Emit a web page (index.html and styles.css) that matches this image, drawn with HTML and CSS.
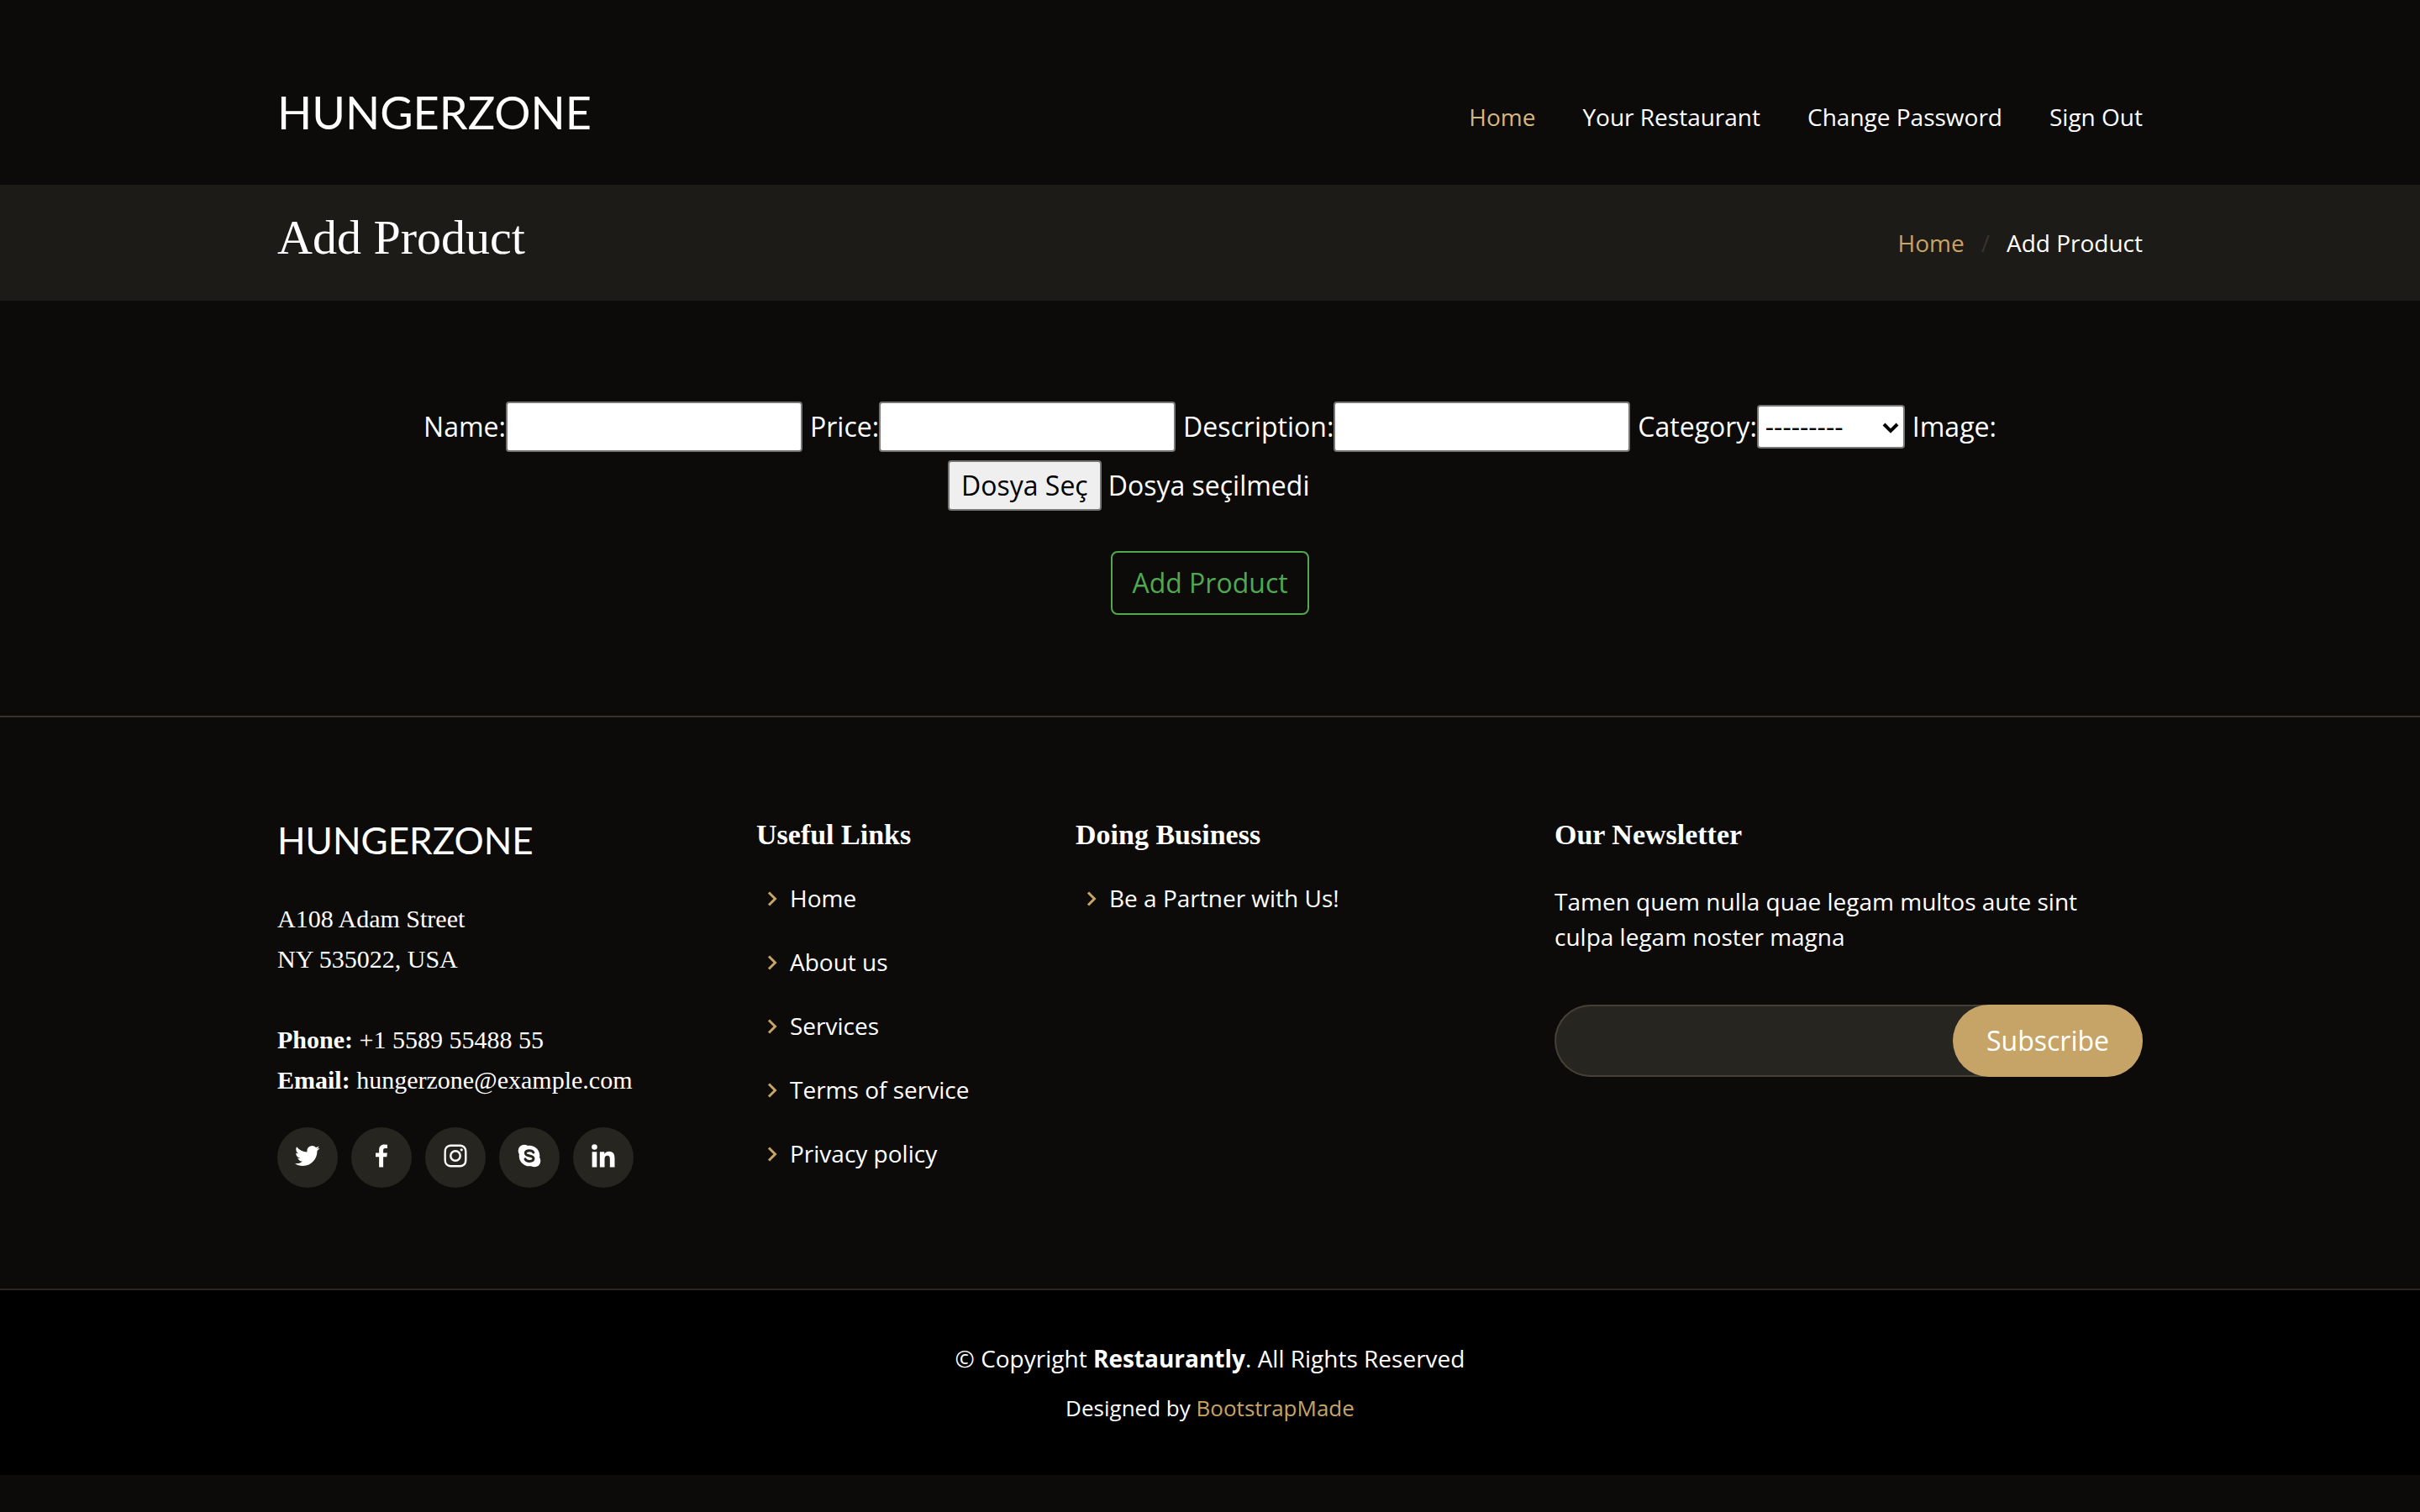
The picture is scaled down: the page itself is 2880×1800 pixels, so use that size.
FILE: index.html
```html
<!DOCTYPE html>
<html lang="tr">
<head>
  <meta charset="utf-8">
  <meta name="viewport" content="width=device-width, initial-scale=1">
  <title>Add Product - Hungerzone</title>
  <link rel="stylesheet" href="styles.css">
</head>
<body>
  <header class="header">
    <div class="container header-row">
      <h1 class="logo"><a href="#">HUNGERZONE</a></h1>
      <nav class="nav">
        <a class="active" href="#">Home</a>
        <a href="#">Your Restaurant</a>
        <a href="#">Change Password</a>
        <a href="#">Sign Out</a>
      </nav>
    </div>
  </header>

  <main>
    <section class="breadcrumbs">
      <div class="container breadcrumbs-row">
        <h2 class="page-title">Add Product</h2>
        <ol class="trail">
          <li><a href="#">Home</a></li>
          <li>Add Product</li>
        </ol>
      </div>
    </section>

    <section class="product">
      <form class="container product-form">
        <div class="fields">
          <div class="field"><label for="name">Name:</label><input class="text-input" id="name" type="text"></div>
          <div class="field"><label for="price">Price:</label><input class="text-input" id="price" type="text"></div>
          <div class="field"><label for="description">Description:</label><input class="text-input" id="description" type="text"></div>
          <div class="field">
            <label for="category">Category:</label>
            <div class="select-wrap">
              <select class="select" id="category"><option>---------</option></select>
              <svg class="select-arrow" viewBox="0 0 20 14" aria-hidden="true"><path d="M2 3l8 8 8-8" fill="none" stroke="#000" stroke-width="4"/></svg>
            </div>
          </div>
          <label for="image">Image:</label>
          <div class="file">
            <input class="file-input" id="image" type="file">
            <span class="file-button">Dosya Seç</span>
            <span>Dosya seçilmedi</span>
          </div>
        </div>
        <button class="submit" type="submit">Add Product</button>
      </form>
    </section>
  </main>

  <footer class="footer">
    <div class="footer-top">
      <div class="container footer-grid">
        <div>
          <h3 class="footer-logo">HUNGERZONE</h3>
          <p class="address">
            A108 Adam Street<br>
            NY 535022, USA<br><br>
            <strong>Phone:</strong> +1 5589 55488 55<br>
            <strong>Email:</strong> hungerzone@example.com
          </p>
          <div class="social">
            <a href="#" aria-label="Twitter"><svg viewBox="0 0 24 24"><path d="M19.633 7.997c.013.175.013.349.013.523 0 5.325-4.053 11.461-11.46 11.461-2.282 0-4.402-.661-6.186-1.809.324.037.636.05.973.05a8.07 8.07 0 0 0 5.001-1.721 4.036 4.036 0 0 1-3.767-2.793c.249.037.499.062.761.062.361 0 .724-.05 1.061-.137a4.027 4.027 0 0 1-3.23-3.953v-.05c.537.299 1.16.486 1.82.511a4.022 4.022 0 0 1-1.796-3.354c0-.748.199-1.434.548-2.032a11.457 11.457 0 0 0 8.306 4.215c-.062-.3-.1-.611-.1-.923a4.026 4.026 0 0 1 4.028-4.028c1.16 0 2.207.486 2.943 1.272a7.957 7.957 0 0 0 2.556-.973 4.02 4.02 0 0 1-1.771 2.22 8.073 8.073 0 0 0 2.319-.624 8.645 8.645 0 0 1-2.019 2.083z"/></svg></a>
            <a href="#" aria-label="Facebook"><svg viewBox="0 0 24 24"><path d="M13.397 20.997v-8.196h2.765l.411-3.209h-3.176V7.548c0-.926.258-1.56 1.587-1.56h1.684V3.127A22.336 22.336 0 0 0 14.201 3c-2.444 0-4.122 1.492-4.122 4.231v2.355H7.332v3.209h2.753v8.202h3.312z"/></svg></a>
            <a href="#" aria-label="Instagram"><svg viewBox="0 0 24 24"><path d="M11.999 7.377a4.623 4.623 0 1 0 0 9.248 4.623 4.623 0 0 0 0-9.248zm0 7.627a3.004 3.004 0 1 1 0-6.008 3.004 3.004 0 0 1 0 6.008z"/><circle cx="16.806" cy="7.207" r="1.078"/><path d="M20.533 6.111A4.605 4.605 0 0 0 17.9 3.479a6.606 6.606 0 0 0-2.186-.42c-.963-.042-1.268-.054-3.71-.054s-2.755 0-3.71.054a6.554 6.554 0 0 0-2.184.42 4.6 4.6 0 0 0-2.633 2.632 6.585 6.585 0 0 0-.419 2.186c-.043.962-.056 1.267-.056 3.71 0 2.442 0 2.753.056 3.71.015.748.156 1.486.419 2.187a4.61 4.61 0 0 0 2.634 2.632 6.584 6.584 0 0 0 2.185.45c.963.042 1.268.055 3.71.055s2.755 0 3.71-.055a6.615 6.615 0 0 0 2.186-.419 4.613 4.613 0 0 0 2.633-2.633c.263-.7.404-1.438.419-2.186.043-.962.056-1.267.056-3.71s0-2.753-.056-3.71a6.581 6.581 0 0 0-.421-2.217zm-1.218 9.532a5.043 5.043 0 0 1-.311 1.688 2.987 2.987 0 0 1-1.712 1.711 4.985 4.985 0 0 1-1.67.311c-.95.044-1.218.055-3.654.055-2.438 0-2.687 0-3.655-.055a4.96 4.96 0 0 1-1.669-.311 2.985 2.985 0 0 1-1.719-1.711 5.08 5.08 0 0 1-.311-1.669c-.043-.95-.053-1.218-.053-3.654 0-2.437 0-2.686.053-3.655a5.038 5.038 0 0 1 .311-1.687c.305-.789.93-1.41 1.719-1.712a5.01 5.01 0 0 1 1.669-.311c.951-.043 1.218-.055 3.655-.055s2.687 0 3.654.055a4.96 4.96 0 0 1 1.67.311 2.991 2.991 0 0 1 1.712 1.712 5.08 5.08 0 0 1 .311 1.669c.043.951.055 1.218.055 3.655 0 2.436 0 2.698-.043 3.654h-.011z"/></svg></a>
            <a href="#" aria-label="Skype"><svg viewBox="0 0 24 24"><circle cx="12" cy="12" r="8.2"/><circle cx="8" cy="8" r="4.9"/><circle cx="16" cy="16" r="4.9"/><path class="skype-s" d="M15.2 9.3c-.5-1-1.700-1.500-3.200-1.500-1.900 0-3.100.8-3.100 2.100 0 3 6.400 1.300 6.400 4.300 0 1.300-1.300 2.100-3.200 2.100-1.700 0-2.900-.6-3.400-1.700"/></svg></a>
            <a href="#" aria-label="LinkedIn"><svg viewBox="0 0 24 24"><circle cx="4.983" cy="5.009" r="2.188"/><path d="M9.237 8.855v12.139h3.769v-6.003c0-1.584.298-3.118 2.262-3.118 1.937 0 1.961 1.811 1.961 3.218v5.904H21v-6.657c0-3.270-.704-5.783-4.526-5.783-1.835 0-3.065 1.007-3.568 1.960h-.051v-1.660H9.237zm-6.142 0H6.870v12.139H3.095z"/></svg></a>
          </div>
        </div>

        <div>
          <h4 class="footer-heading">Useful Links</h4>
          <ul class="links">
            <li><svg viewBox="0 0 24 24" aria-hidden="true"><path d="M10.707 17.707 16.414 12l-5.707-5.707-1.414 1.414L13.586 12l-4.293 4.293z"/></svg><a href="#">Home</a></li>
            <li><svg viewBox="0 0 24 24" aria-hidden="true"><path d="M10.707 17.707 16.414 12l-5.707-5.707-1.414 1.414L13.586 12l-4.293 4.293z"/></svg><a href="#">About us</a></li>
            <li><svg viewBox="0 0 24 24" aria-hidden="true"><path d="M10.707 17.707 16.414 12l-5.707-5.707-1.414 1.414L13.586 12l-4.293 4.293z"/></svg><a href="#">Services</a></li>
            <li><svg viewBox="0 0 24 24" aria-hidden="true"><path d="M10.707 17.707 16.414 12l-5.707-5.707-1.414 1.414L13.586 12l-4.293 4.293z"/></svg><a href="#">Terms of service</a></li>
            <li><svg viewBox="0 0 24 24" aria-hidden="true"><path d="M10.707 17.707 16.414 12l-5.707-5.707-1.414 1.414L13.586 12l-4.293 4.293z"/></svg><a href="#">Privacy policy</a></li>
          </ul>
        </div>

        <div>
          <h4 class="footer-heading">Doing Business</h4>
          <ul class="links">
            <li><svg viewBox="0 0 24 24" aria-hidden="true"><path d="M10.707 17.707 16.414 12l-5.707-5.707-1.414 1.414L13.586 12l-4.293 4.293z"/></svg><a href="#">Be a Partner with Us!</a></li>
          </ul>
        </div>

        <div>
          <h4 class="footer-heading">Our Newsletter</h4>
          <p class="newsletter-text">Tamen quem nulla quae legam multos aute sint culpa legam noster magna</p>
          <form class="newsletter">
            <input class="newsletter-input" type="email" aria-label="Email address">
            <button class="newsletter-button" type="submit">Subscribe</button>
          </form>
        </div>
      </div>
    </div>

    <div class="footer-bottom">
      <p class="copyright">© Copyright <strong>Restaurantly</strong>. All Rights Reserved</p>
      <p class="credits">Designed by <a href="#">BootstrapMade</a></p>
    </div>
  </footer>
</body>
</html>
```

FILE: styles.css
```css
:root {
  --gold: #c6a468;
  --page: #0c0b09;
  --panel: #272520;
  --serif: "Liberation Serif", serif;
  --sans: "Open Sans", sans-serif;
  --display: Lato, sans-serif;
}

*,
*::before,
*::after {
  box-sizing: border-box;
}

body {
  margin: 0;
  background: var(--page);
  color: #fff;
  font-family: var(--sans);
  font-size: 32px;
  line-height: 1.5;
}

h1,
h2,
h3,
h4,
p,
ul,
ol {
  margin: 0;
  padding: 0;
}

ul,
ol {
  list-style: none;
}

a {
  color: inherit;
  text-decoration: none;
}

input,
select,
button {
  font: inherit;
}

.container {
  width: 100%;
  max-width: 2280px;
  margin: 0 auto;
  padding: 0 30px;
}

/* Header */
.header {
  padding: 100px 0 42px;
}

.header-row {
  display: flex;
  justify-content: space-between;
  align-items: center;
}

.logo {
  padding-bottom: 10px;
  font-family: var(--display);
  font-size: 54px;
  font-weight: 400;
  line-height: 68px;
}

.nav {
  display: flex;
  gap: 56px;
  font-size: 28px;
}

.nav .active {
  color: #d5b67f;
}

/* Breadcrumbs */
.breadcrumbs {
  padding: 29px 0;
  background: #1d1b17;
}

.breadcrumbs-row {
  display: flex;
  justify-content: space-between;
  align-items: center;
}

.page-title {
  padding-bottom: 12px;
  font-family: var(--serif);
  font-size: 58px;
  font-weight: 400;
  line-height: 68px;
}

.trail {
  display: flex;
  font-size: 28px;
}

.trail a {
  color: var(--gold);
}

.trail li + li::before {
  content: "/";
  padding: 0 20px;
  color: #37332a;
}

/* Product form */
.product {
  padding: 120px 0;
}

.product-form {
  display: flex;
  flex-direction: column;
  align-items: center;
  gap: 48px;
}

.fields {
  display: flex;
  flex-wrap: wrap;
  justify-content: center;
  align-items: center;
  gap: 10px 9px;
}

.field {
  display: flex;
  align-items: center;
}

.text-input {
  width: 353px;
  height: 60px;
  padding: 2px 4px;
  border: 2px solid #767676;
  border-radius: 4px;
  background: #fff;
}

.select-wrap {
  position: relative;
  display: flex;
}

.select {
  appearance: none;
  width: 176px;
  height: 52px;
  padding: 0 8px;
  border: 2px solid #767676;
  border-radius: 4px;
  background: #fff;
  color: #000;
  line-height: 48px;
}

.select-arrow {
  position: absolute;
  top: 20px;
  right: 7px;
  width: 20px;
  height: 14px;
  pointer-events: none;
}

.file {
  position: relative;
  display: flex;
  align-items: center;
  gap: 8px;
  width: 624px;
}

.file-input {
  position: absolute;
  inset: 0;
  width: 100%;
  opacity: 0;
}

.file-button {
  height: 60px;
  padding: 0 14px;
  border: 2px solid #767676;
  border-radius: 4px;
  background: #efefef;
  color: #000;
  line-height: 56px;
}

.submit {
  height: 76px;
  padding: 0 23px;
  border: 2px solid #51a851;
  border-radius: 8px;
  background: transparent;
  color: #51a851;
}

/* Footer */
.footer-top {
  padding: 120px 0;
  border-top: 2px solid #37332a;
  border-bottom: 2px solid #28261f;
}

.footer-grid {
  display: grid;
  grid-template-columns: 510fr 320fr 510fr 700fr;
  gap: 60px;
}

.footer-logo {
  margin-bottom: 44px;
  font-family: var(--display);
  font-size: 44px;
  font-weight: 400;
  line-height: 52px;
}

.address {
  margin-bottom: 32px;
  font-family: var(--serif);
  font-size: 30px;
  line-height: 48px;
}

.social {
  display: flex;
  gap: 16px;
}

.social a {
  display: flex;
  justify-content: center;
  width: 72px;
  height: 72px;
  padding-top: 16px;
  border-radius: 50%;
  background: var(--panel);
}

.social svg {
  width: 36px;
  height: 36px;
  fill: #fff;
}

.social .skype-s {
  fill: none;
  stroke: var(--panel);
  stroke-width: 2;
  stroke-linecap: round;
}

.footer-heading {
  margin-bottom: 38px;
  font-family: var(--serif);
  font-size: 34px;
  font-weight: 700;
  line-height: 40px;
}

.links {
  display: grid;
  gap: 40px;
  font-size: 28px;
  line-height: 34px;
}

.links li {
  display: flex;
  gap: 4px;
  white-space: nowrap;
}

.links svg {
  flex: none;
  width: 36px;
  height: 36px;
  fill: var(--gold);
}

.newsletter-text {
  margin-bottom: 60px;
  padding-right: 20px;
  font-size: 28px;
}

.newsletter {
  display: flex;
  height: 86px;
  border-radius: 43px;
  background: var(--panel);
  box-shadow: inset 0 0 0 2px #454035;
}

.newsletter-input {
  flex: 1;
  min-width: 0;
  padding: 0 30px;
  border: 0;
  background: transparent;
  color: #fff;
}

.newsletter-button {
  padding: 0 40px;
  border: 0;
  border-radius: 43px;
  background: var(--gold);
  color: #fff;
}

.footer-bottom {
  padding: 60px 30px;
  background: #000;
  text-align: center;
}

.copyright {
  margin-bottom: 19px;
  font-size: 28px;
}

.credits {
  font-size: 26px;
}

.credits a {
  color: var(--gold);
}
```
